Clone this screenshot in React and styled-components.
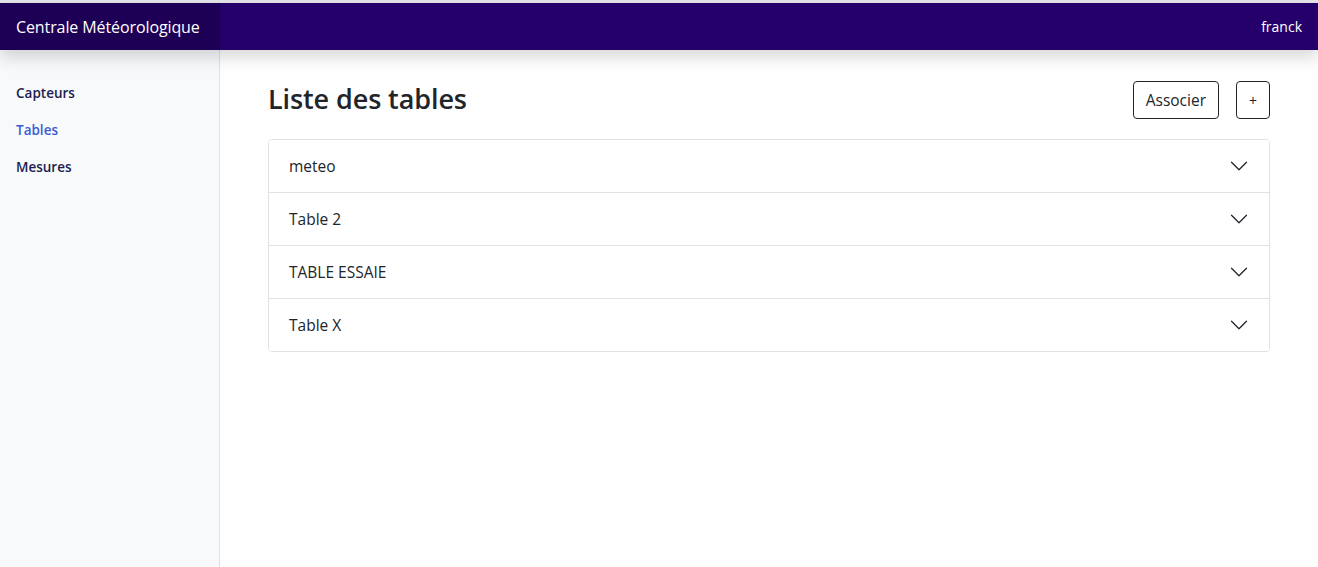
import React from 'react'
import styled, { createGlobalStyle } from 'styled-components'

const GlobalStyle = createGlobalStyle`
  * { box-sizing: border-box; }
  html, body { margin: 0; padding: 0; background: #ffffff; }
  body {
    font-family: "Open Sans", "Noto Sans", sans-serif;
    color: #212529;
  }
`

const Page = styled.div`
  min-height: 100vh;
  display: flex;
  flex-direction: column;
`

const TopStrip = styled.div`
  height: 3px;
  background: #e4e4e8;
`

const Navbar = styled.header`
  position: relative;
  z-index: 2;
  height: 47px;
  display: flex;
  align-items: stretch;
  justify-content: space-between;
  background: #25006b;
  box-shadow: 0 8px 16px rgba(0, 0, 0, 0.15);
`

const Brand = styled.div`
  width: 220px;
  display: flex;
  align-items: center;
  padding-left: 16px;
  background: rgba(0, 0, 0, 0.2);
  box-shadow: inset -1px 0 0 rgba(0, 0, 0, 0.25);
  color: #ffffff;
  font-size: 16px;
  letter-spacing: -0.1px;
`

const User = styled.div`
  display: flex;
  align-items: center;
  padding-right: 16px;
  color: #ffffff;
  font-size: 14px;
`

const Body = styled.div`
  flex: 1;
  display: flex;
`

const Sidebar = styled.nav`
  width: 220px;
  flex-shrink: 0;
  background: #f8f9fa;
  border-right: 1px solid #dfe1e4;
  padding-top: 32px;
  display: flex;
  flex-direction: column;
  gap: 15px;
`

const NavLink = styled.a`
  padding: 0 16px;
  line-height: 22px;
  font-size: 13.5px;
  font-weight: 600;
  text-decoration: none;
  color: ${p => (p.$active ? '#3b5bd6' : '#1c1d4f')};
  cursor: pointer;
`

const Main = styled.main`
  flex: 1;
  padding: 31px 48px 0 48px;
`

const Header = styled.div`
  display: flex;
  justify-content: space-between;
  align-items: center;
  margin-bottom: 20px;
`

const Title = styled.h1`
  margin: -4px 0 0 0;
  font-size: 27px;
  font-weight: 600;
  color: #212529;
  letter-spacing: -0.1px;
`

const Actions = styled.div`
  display: flex;
  gap: 17px;
`

const Button = styled.button`
  height: 38px;
  min-width: ${p => (p.$square ? '34px' : 'auto')};
  padding: 0 ${p => (p.$square ? '0' : '12px')};
  border: 1px solid #212529;
  border-radius: 4px;
  background: #ffffff;
  color: #212529;
  font-family: inherit;
  font-size: ${p => (p.$square ? '14px' : '15.5px')};
  cursor: pointer;
`

const Accordion = styled.div`
  border: 1px solid #dee2e6;
  border-radius: 4px;
  overflow: hidden;
`

const Item = styled.button`
  box-sizing: content-box;
  width: calc(100% - 40px);
  height: 52px;
  display: flex;
  align-items: center;
  justify-content: space-between;
  padding: 0 20px;
  border: none;
  border-top: ${p => (p.$first ? 'none' : '1px solid #dee2e6')};
  background: #ffffff;
  color: #212529;
  font-family: inherit;
  font-size: 15.5px;
  text-align: left;
  cursor: pointer;
`

const Chevron = () => (
  <svg width="20" height="20" viewBox="0 0 16 16" fill="none" stroke="#212529" strokeWidth="1" strokeLinecap="round" strokeLinejoin="round">
    <path d="M2 5L8 11L14 5" />
  </svg>
)

const tables = ['meteo', 'Table 2', 'TABLE ESSAIE', 'Table X']

export default function App() {
  return (
    <>
      <GlobalStyle />
      <Page>
        <TopStrip />
        <Navbar>
          <Brand>Centrale Météorologique</Brand>
          <User>franck</User>
        </Navbar>
        <Body>
          <Sidebar>
            <NavLink>Capteurs</NavLink>
            <NavLink $active>Tables</NavLink>
            <NavLink>Mesures</NavLink>
          </Sidebar>
          <Main>
            <Header>
              <Title>Liste des tables</Title>
              <Actions>
                <Button>Associer</Button>
                <Button $square>+</Button>
              </Actions>
            </Header>
            <Accordion>
              {tables.map((t, i) => (
                <Item key={t} $first={i === 0}>
                  <span>{t}</span>
                  <Chevron />
                </Item>
              ))}
            </Accordion>
          </Main>
        </Body>
      </Page>
    </>
  )
}
